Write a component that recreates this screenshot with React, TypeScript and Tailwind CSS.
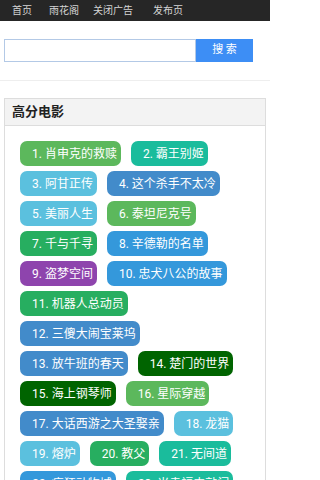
import React from "react";

const movies: { name: string; color: string }[] = [
  { name: "肖申克的救赎", color: "bg-[#5cb85c]" },
  { name: "霸王别姬", color: "bg-[#1abc9c]" },
  { name: "阿甘正传", color: "bg-[#5bc0de]" },
  { name: "这个杀手不太冷", color: "bg-[#428bca]" },
  { name: "美丽人生", color: "bg-[#5bc0de]" },
  { name: "泰坦尼克号", color: "bg-[#5cb85c]" },
  { name: "千与千寻", color: "bg-[#27ae60]" },
  { name: "辛德勒的名单", color: "bg-[#3498db]" },
  { name: "盗梦空间", color: "bg-[#8e44ad]" },
  { name: "忠犬八公的故事", color: "bg-[#3498db]" },
  { name: "机器人总动员", color: "bg-[#27ae60]" },
  { name: "三傻大闹宝莱坞", color: "bg-[#428bca]" },
  { name: "放牛班的春天", color: "bg-[#428bca]" },
  { name: "楚门的世界", color: "bg-[#006400]" },
  { name: "海上钢琴师", color: "bg-[#006400]" },
  { name: "星际穿越", color: "bg-[#5cb85c]" },
  { name: "大话西游之大圣娶亲", color: "bg-[#428bca]" },
  { name: "龙猫", color: "bg-[#5bc0de]" },
  { name: "熔炉", color: "bg-[#5bc0de]" },
  { name: "教父", color: "bg-[#27ae60]" },
  { name: "无间道", color: "bg-[#1abc9c]" },
  { name: "疯狂动物城", color: "bg-[#3498db]" },
  { name: "当幸福来敲门", color: "bg-[#1abc9c]" },
];

export default function App() {
  return (
    <div className="h-[480px] w-[270px] overflow-hidden bg-white font-['Roboto','Noto_Sans_CJK_SC',sans-serif]">
      {/* top nav */}
      <div className="flex h-[21px] items-center bg-[#262626] pl-[12px] text-[10px] text-[#d4d4d4]">
        <span>首页</span>
        <span className="ml-[17px]">雨花阁</span>
        <span className="ml-[14px]">关闭广告</span>
        <span className="ml-[20px]">发布页</span>
      </div>

      {/* search */}
      <div className="flex px-[4px] pt-[18px] pb-[18px]">
        <input className="h-[23px] w-[192px] border border-[#b3c9e6] bg-white px-1 text-[11px] outline-none" />
        <button className="h-[23px] w-[57px] bg-[#3d8ef5] text-[11px] text-white">搜 索</button>
      </div>
      <div className="h-px bg-[#eeeeee]" />

      {/* panel */}
      <div className="mx-[4px] mt-[17px] border border-[#dddddd]">
        <div className="flex h-[27px] items-center border-b border-[#dddddd] bg-[#f3f3f3] pl-[7px] text-[13px] font-bold text-[#222]">
          高分电影
        </div>
        <div className="flex flex-wrap gap-x-[10px] gap-y-[5px] p-[15px]">
          {movies.map((m, i) => (
            <span
              key={m.name}
              className={`${m.color} flex h-[25px] items-center rounded-[7px] pl-3 pr-1 text-[12px] text-white`}
            >
              {i + 1}. {m.name}
            </span>
          ))}
        </div>
      </div>
    </div>
  );
}
